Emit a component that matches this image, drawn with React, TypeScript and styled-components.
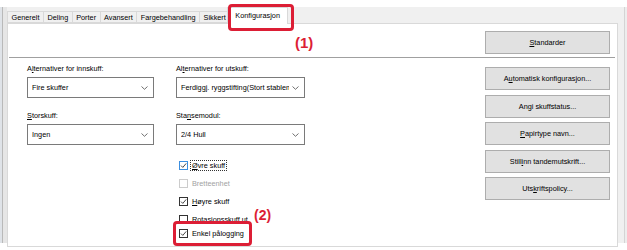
import styled, { createGlobalStyle } from 'styled-components';

const GlobalStyle = createGlobalStyle`
  body {
    margin: 0;
    background: #fff;
    font-family: "Liberation Sans", Arial, sans-serif;
  }
`;

const Screen = styled.div`
  position: relative;
  width: 627px;
  height: 250px;
  padding-top: 7px;
  box-sizing: border-box;
  overflow: hidden;
  font-size: 7.3px;
  color: #000;
`;

const Window = styled.div`
  display: flex;
  height: 236px;
  background: #f0f0f0;
`;

const LeftEdge = styled.div`
  width: 7px;
  background: linear-gradient(to right, #dfe3e8 0 2px, #b9b9b9 2px 3px, #e6e6e6 3px 7px);
`;

const RightEdge = styled.div`
  width: 9px;
  background: linear-gradient(to right, #f0f0f0 0 6px, #d4d4d4 6px 7px, #ededed 7px);
`;

const Main = styled.div`
  flex: 1;
  display: flex;
  flex-direction: column;
  padding-bottom: 2px;
`;

const TabStrip = styled.div`
  display: flex;
  align-items: flex-end;
  height: 18px;
  padding-left: 1px;
`;

const Tab = styled.div<{ $active?: boolean }>`
  position: relative;
  z-index: ${p => (p.$active ? 2 : 1)};
  display: flex;
  align-items: center;
  height: ${p => (p.$active ? '17px' : '12px')};
  margin-bottom: ${p => (p.$active ? '-1px' : '0')};
  margin-left: ${p => (p.$active ? '-3px' : '-1px')};
  padding: ${p => (p.$active ? '0 7px 2px' : '0 3.5px')};
  background: ${p => (p.$active ? '#fff' : '#f0f0f0')};
  border: 1px solid #d9d9d9;
  border-bottom: ${p => (p.$active ? 'none' : '1px solid #d9d9d9')};
  box-sizing: border-box;
  white-space: nowrap;
`;

const Panel = styled.div`
  flex: 1;
  display: flex;
  flex-direction: column;
  background: #fff;
  border: 1px solid #d9d9d9;
`;

const TopBar = styled.div`
  display: flex;
  justify-content: flex-end;
  margin: 0 2px 0 1px;
  padding: 7px 5px 3px 0;
  border-bottom: 1px solid #a0a0a0;
`;

const Body = styled.div`
  display: flex;
  justify-content: space-between;
  padding: 0 7px 0 19px;
`;

const LeftArea = styled.div`
  display: flex;
  flex-direction: column;
  padding-top: 6px;
`;

const FieldGrid = styled.div`
  display: grid;
  grid-template-columns: 127px 129px;
  column-gap: 22px;
  row-gap: 13px;
`;

const Field = styled.div`
  display: flex;
  flex-direction: column;
  gap: 3px;
`;

const Label = styled.div`
  line-height: 10px;
  white-space: nowrap;
`;

const SelectBox = styled.div`
  display: flex;
  align-items: center;
  height: 21px;
  padding: 0 5px 0 4px;
  border: 1px solid #7a7a7a;
  box-sizing: border-box;
  background: #fff;
  gap: 3px;
`;

const SelectText = styled.span`
  flex: 1;
  overflow: hidden;
  white-space: nowrap;
`;

const CheckList = styled.div`
  display: flex;
  flex-direction: column;
  margin: 11px 0 0 152px;
`;

const CheckRow = styled.div`
  display: flex;
  align-items: center;
  gap: 3px;
  height: 18px;
`;

const Box = styled.span<{ $state: 'focus' | 'normal' | 'disabled' }>`
  display: flex;
  align-items: center;
  justify-content: center;
  width: 9px;
  height: 9px;
  box-sizing: border-box;
  background: #fff;
  border: 1px solid
    ${p => (p.$state === 'focus' ? '#3c8fe0' : p.$state === 'disabled' ? '#cccccc' : '#333')};
`;

const CheckLabel = styled.span<{ $disabled?: boolean; $focus?: boolean }>`
  color: ${p => (p.$disabled ? '#a2a2a2' : '#000')};
  outline: ${p => (p.$focus ? '1px dotted #333' : 'none')};
  padding: 0 1px;
  white-space: nowrap;
`;

const Highlight = styled.div`
  position: relative;
  z-index: 2;
  display: flex;
  align-items: center;
  gap: 3px;
  width: 79px;
  height: 25px;
  margin: -7px 0 0 -6px;
  padding-left: 3px;
  border: 3px solid #dc1e35;
  border-radius: 4px;
  background: #fff;
  box-sizing: border-box;
`;

const ButtonColumn = styled.div`
  display: flex;
  flex-direction: column;
  gap: 4.5px;
  padding-top: 9px;
`;

const Button = styled.div`
  display: flex;
  align-items: center;
  justify-content: center;
  width: 125px;
  height: 23px;
  background: #e1e1e1;
  border: 1px solid #adadad;
  box-sizing: border-box;
  white-space: nowrap;
`;

const TabCallout = styled.div`
  position: absolute;
  left: 228px;
  top: 4px;
  width: 66px;
  height: 27px;
  border: 3px solid #dc1e35;
  border-radius: 4px;
  box-sizing: border-box;
  z-index: 3;
`;

const Marker = styled.span<{ $size: number }>`
  position: absolute;
  font-family: "Liberation Sans", Arial, sans-serif;
  font-weight: bold;
  font-size: ${p => p.$size}px;
  color: #dc1e35;
  line-height: 1;
`;

const Chevron = () => (
  <svg width="7" height="4" viewBox="0 0 7 4">
    <polyline points="0.5,0.5 3.5,3.3 6.5,0.5" fill="none" stroke="#606060" strokeWidth="0.9" />
  </svg>
);

const Tick = () => (
  <svg width="7" height="7" viewBox="0 0 7 7">
    <polyline points="1,3.6 2.8,5.4 6.2,1.4" fill="none" stroke="#333" strokeWidth="0.9" />
  </svg>
);

function Select({ value }: { value: string }) {
  return (
    <SelectBox>
      <SelectText>{value}</SelectText>
      <Chevron />
    </SelectBox>
  );
}

const tabs = ['Generelt', 'Deling', 'Porter', 'Avansert', 'Fargebehandling', 'Sikkert'];

function App() {
  return (
    <Screen>
      <GlobalStyle />
      <Window>
        <LeftEdge />
        <Main>
          <TabStrip>
            {tabs.map(t => (
              <Tab key={t}>{t}</Tab>
            ))}
            <Tab $active>Konfigurasjon</Tab>
          </TabStrip>
          <Panel>
            <TopBar>
              <Button><u>S</u>tandarder</Button>
            </TopBar>
            <Body>
              <LeftArea>
                <FieldGrid>
                  <Field>
                    <Label>A<u>l</u>ternativer for innskuff:</Label>
                    <Select value="Fire skuffer" />
                  </Field>
                  <Field>
                    <Label>Al<u>t</u>ernativer for utskuff:</Label>
                    <Select value="Ferdiggj. ryggstifting(Stort stablema" />
                  </Field>
                  <Field>
                    <Label><u>S</u>torskuff:</Label>
                    <Select value="Ingen" />
                  </Field>
                  <Field>
                    <Label>Sta<u>n</u>semodul:</Label>
                    <Select value="2/4 Hull" />
                  </Field>
                </FieldGrid>
                <CheckList>
                  <CheckRow>
                    <Box $state="focus"><Tick /></Box>
                    <CheckLabel $focus><u>Ø</u>vre skuff</CheckLabel>
                  </CheckRow>
                  <CheckRow>
                    <Box $state="disabled" />
                    <CheckLabel $disabled>Bretteenhet</CheckLabel>
                  </CheckRow>
                  <CheckRow>
                    <Box $state="normal"><Tick /></Box>
                    <CheckLabel><u>H</u>øyre skuff</CheckLabel>
                  </CheckRow>
                  <CheckRow>
                    <Box $state="normal" />
                    <CheckLabel>Rotasjonsskuff ut</CheckLabel>
                  </CheckRow>
                  <Highlight>
                    <Box $state="normal"><Tick /></Box>
                    <CheckLabel>Enkel pålogging</CheckLabel>
                  </Highlight>
                </CheckList>
              </LeftArea>
              <ButtonColumn>
                <Button>A<u>u</u>tomatisk konfigurasjon...</Button>
                <Button>Angi skuffstatus...</Button>
                <Button><u>P</u>apirtype navn...</Button>
                <Button>Still <u>i</u>nn tandemutskrift...</Button>
                <Button>Uts<u>k</u>riftspolicy...</Button>
              </ButtonColumn>
            </Body>
          </Panel>
        </Main>
        <RightEdge />
      </Window>
      <TabCallout />
      <Marker $size={15} style={{ left: 295, top: 35 }}>(1)</Marker>
      <Marker $size={14} style={{ left: 254, top: 208 }}>(2)</Marker>
    </Screen>
  );
}

export default App;
